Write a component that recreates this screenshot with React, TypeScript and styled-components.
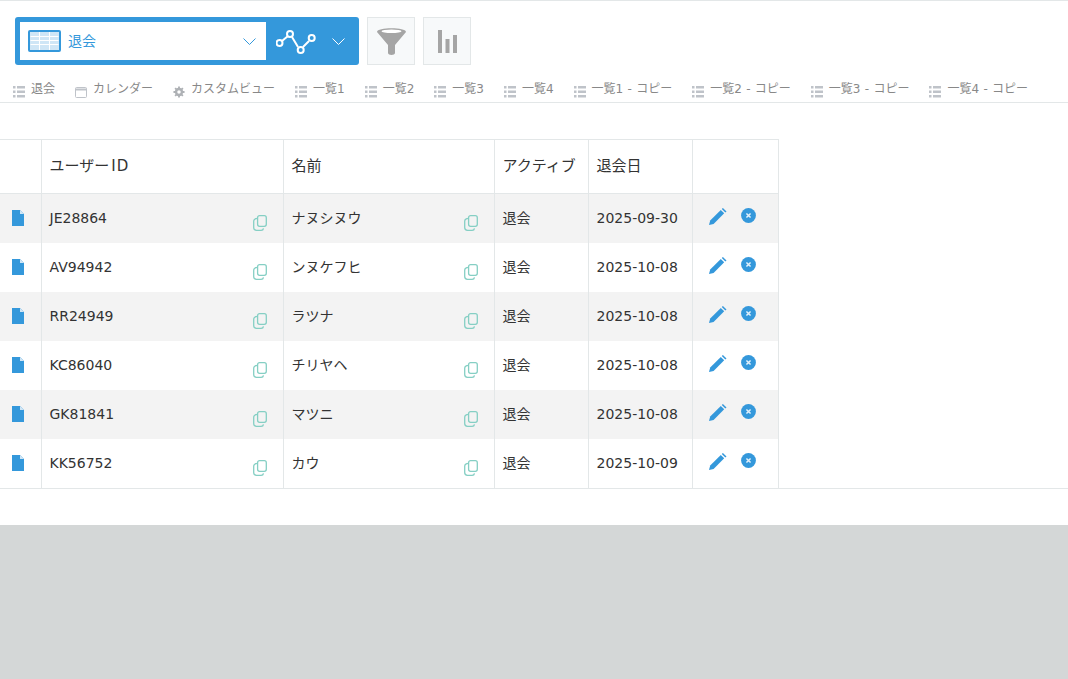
import styled, { createGlobalStyle } from 'styled-components';

const GlobalStyle = createGlobalStyle`
  html, body {
    margin: 0;
    padding: 0;
    background: #d4d7d7;
  }
  body {
    font-family: "DejaVu Sans", "Noto Sans CJK JP", sans-serif;
    color: #333;
  }
`;

const Page = styled.div`
  background: #fff;
  height: 525px;
  border-top: 1px solid #e3e7e8;
  box-sizing: border-box;
`;

const Toolbar = styled.div`
  display: flex;
  align-items: flex-start;
  gap: 8px;
  padding: 16px 0 0 15px;
`;

const ViewSwitcher = styled.div`
  display: flex;
  width: 344px;
  height: 48px;
  box-sizing: border-box;
  padding: 5px 0 5px 5px;
  background: #3498db;
  border-radius: 3px;
`;

const ViewSelect = styled.div`
  display: flex;
  align-items: center;
  width: 246px;
  background: #fff;
  padding: 0 10px 0 8px;
  box-sizing: border-box;
`;

const ViewName = styled.span`
  flex: 1;
  margin: 0 0 2px 7px;
  font-size: 14px;
  color: #3498db;
`;

const GraphSelect = styled.div`
  display: flex;
  align-items: center;
  padding-left: 10px;
  gap: 16px;
`;

const ToolButton = styled.div`
  display: flex;
  align-items: center;
  justify-content: center;
  width: 48px;
  height: 48px;
  box-sizing: border-box;
  background: #f7f9fa;
  border: 1px solid #e3e7e8;
`;

const Tabs = styled.div`
  display: flex;
  gap: 20px;
  height: 38px;
  padding: 16px 0 0 13px;
  box-sizing: border-box;
  border-bottom: 1px solid #e3e7e8;
`;

const Tab = styled.div`
  display: flex;
  align-items: flex-start;
  gap: 6px;
  font-size: 12px;
  line-height: 17px;
  word-spacing: 0.5px;
  color: #888;
  white-space: nowrap;
  svg {
    margin-top: 5px;
    flex: none;
  }
`;

const Table = styled.table`
  margin-top: 36px;
  width: 778px;
  table-layout: fixed;
  border-collapse: collapse;
  border-top: 1px solid #e3e7e8;
  font-size: 14px;
`;

const TableFoot = styled.div`
  border-top: 1px solid #e3e7e8;
`;

const HeadCell = styled.th`
  height: 54px;
  padding: 0 8px 5px;
  box-sizing: border-box;
  font-size: 15px;
  font-weight: 400;
  text-align: left;
  white-space: nowrap;
  border-right: 1px solid #e3e7e8;
  border-bottom: 1px solid #e3e7e8;
`;

const HeadLatin = styled.span`
  margin-left: 2px;
  letter-spacing: 1px;
`;

const Row = styled.tr<{ $odd: boolean }>`
  height: 49px;
  background: ${(p) => (p.$odd ? '#f3f3f3' : '#fff')};
`;

const Cell = styled.td`
  padding: 0 8px;
  box-sizing: border-box;
  white-space: nowrap;
  border-right: 1px solid #e3e7e8;
`;

const IconCell = styled(Cell)`
  padding: 0 0 0 12px;
  line-height: 0;
`;

const StatusCell = styled(Cell)`
  padding-bottom: 2px;
`;

const CopyCell = styled.div`
  display: flex;
  align-items: center;
  justify-content: space-between;
  padding-right: 8px;
  svg {
    margin-top: 10px;
  }
`;

const NameText = styled.span`
  margin-bottom: 2px;
`;

const Actions = styled.div`
  display: flex;
  align-items: center;
  gap: 14px;
  padding: 0 0 5px 8px;
  svg:first-child {
    margin-top: 2px;
  }
`;

const Chevron = ({ color }: { color: string }) => (
  <svg width="13" height="7" viewBox="0 0 13 7" fill="none">
    <path d="M0.5 0.5l6 6 6-6" stroke={color} strokeWidth="1" />
  </svg>
);

const TableIcon = () => (
  <svg width="33" height="22" viewBox="0 0 33 22">
    <rect x="0" y="0" width="33" height="22" rx="2" fill="#3498db" />
    <rect x="2" y="2" width="29" height="18" fill="#cfe6f6" />
    <path d="M2.5 6.5h28M2.5 10.5h28M2.5 14.5h28M11.5 2v18M21.5 2v18" stroke="#fff" strokeWidth="1" />
  </svg>
);

const GraphIcon = () => (
  <svg width="40" height="26" viewBox="0 0 40 26" fill="none" stroke="#fff" strokeWidth="2">
    <path d="M6 13l6-5M16 9l6 10M27 19l6-6" />
    <circle cx="3.5" cy="15" r="3" />
    <circle cx="14" cy="6" r="3" />
    <circle cx="24.7" cy="22" r="3" />
    <circle cx="35.7" cy="10" r="3" />
  </svg>
);

const FunnelIcon = () => (
  <svg width="29" height="27" viewBox="0 0 29 27">
    <path d="M0 4C0 -1 29 -1 29 4L18 17V25C18 27.5 11 27.5 11 25V17Z" fill="#a5a5a5" />
    <ellipse cx="14.5" cy="3.2" rx="10" ry="1.7" fill="#fff" />
  </svg>
);

const BarsIcon = () => (
  <svg width="19" height="23" viewBox="0 0 19 23" fill="#a5a5a5">
    <rect x="0" y="0" width="4" height="23" />
    <rect x="7.5" y="9" width="4" height="14" />
    <rect x="15" y="5" width="4" height="18" />
  </svg>
);

const ListIcon = () => (
  <svg width="12" height="12" viewBox="0 0 12 12" fill="#bfc3c9">
    <rect x="0" y="0" width="2.5" height="2.5" />
    <rect x="4" y="0" width="8" height="2.5" />
    <rect x="0" y="4.5" width="2.5" height="2.5" />
    <rect x="4" y="4.5" width="8" height="2.5" />
    <rect x="0" y="9" width="2.5" height="2.5" />
    <rect x="4" y="9" width="8" height="2.5" />
  </svg>
);

const CalendarIcon = () => (
  <svg width="12" height="12" viewBox="0 0 12 12" fill="none" stroke="#bfc3c9">
    <rect x="0.5" y="1.5" width="11" height="10" rx="1" />
    <path d="M0.5 3.5h11" strokeWidth="2" />
  </svg>
);

const GearIcon = () => (
  <svg width="12" height="12" viewBox="0 0 13 13" fill="none" stroke="#aeb1b5">
    <circle cx="6.5" cy="6.5" r="3.2" strokeWidth="2.6" />
    <path d="M6.5 0.5v2M6.5 10.5v2M0.5 6.5h2M10.5 6.5h2M2.3 2.3l1.4 1.4M9.3 9.3l1.4 1.4M2.3 10.7l1.4-1.4M9.3 3.7l1.4-1.4" strokeWidth="2" />
  </svg>
);

const DocIcon = () => (
  <svg width="12" height="16" viewBox="0 0 12 16">
    <path d="M0 0h8l4 4v12H0Z" fill="#3498db" />
    <path d="M8 0l4 4H8Z" fill="#cfe6f6" />
  </svg>
);

const CopyIcon = () => (
  <svg width="14" height="16" viewBox="0 0 14 16" fill="none" stroke="#85cfc4" strokeWidth="1.3">
    <rect x="4.6" y="0.7" width="8.7" height="10.6" rx="2" />
    <path d="M4.6 3.4C2 3.4 0.7 4.4 0.7 6.4v6.2c0 1.8 1 2.7 2.8 2.7h4.6c1.3 0 2.2-.7 2.4-2" />
  </svg>
);

const PencilIcon = () => (
  <svg width="18" height="17" viewBox="0 0 18 17" fill="#3498db">
    <path d="M0 17l1.2-4.6L11.8 1.9l3.4 3.4L4.6 15.9Z" />
    <path d="M12.8 0.9l1.1-0.9 3.6 3.4-1.2 1Z" />
  </svg>
);

const CloseIcon = () => (
  <svg width="15" height="15" viewBox="0 0 16 16">
    <circle cx="8" cy="8" r="7.9" fill="#3498db" />
    <path d="M5.8 5.8l4.4 4.4M10.2 5.8l-4.4 4.4" stroke="#e3f1fb" strokeWidth="1.6" />
  </svg>
);

const tabs = [
  { label: '退会', icon: <ListIcon /> },
  { label: 'カレンダー', icon: <CalendarIcon /> },
  { label: 'カスタムビュー', icon: <GearIcon /> },
  { label: '一覧1', icon: <ListIcon /> },
  { label: '一覧2', icon: <ListIcon /> },
  { label: '一覧3', icon: <ListIcon /> },
  { label: '一覧4', icon: <ListIcon /> },
  { label: '一覧1 - コピー', icon: <ListIcon /> },
  { label: '一覧2 - コピー', icon: <ListIcon /> },
  { label: '一覧3 - コピー', icon: <ListIcon /> },
  { label: '一覧4 - コピー', icon: <ListIcon /> },
];

const records = [
  { id: 'JE28864', name: 'ナヌシヌウ', date: '2025-09-30' },
  { id: 'AV94942', name: 'ンヌケフヒ', date: '2025-10-08' },
  { id: 'RR24949', name: 'ラツナ', date: '2025-10-08' },
  { id: 'KC86040', name: 'チリヤヘ', date: '2025-10-08' },
  { id: 'GK81841', name: 'マツニ', date: '2025-10-08' },
  { id: 'KK56752', name: 'カウ', date: '2025-10-09' },
];

export default function App() {
  return (
    <>
      <GlobalStyle />
      <Page>
        <Toolbar>
          <ViewSwitcher>
            <ViewSelect>
              <TableIcon />
              <ViewName>退会</ViewName>
              <Chevron color="#3498db" />
            </ViewSelect>
            <GraphSelect>
              <GraphIcon />
              <Chevron color="#fff" />
            </GraphSelect>
          </ViewSwitcher>
          <ToolButton>
            <FunnelIcon />
          </ToolButton>
          <ToolButton>
            <BarsIcon />
          </ToolButton>
        </Toolbar>
        <Tabs>
          {tabs.map((tab) => (
            <Tab key={tab.label}>
              {tab.icon}
              {tab.label}
            </Tab>
          ))}
        </Tabs>
        <Table>
          <colgroup>
            <col width={41} />
            <col width={242} />
            <col width={211} />
            <col width={94} />
            <col width={104} />
            <col width={86} />
          </colgroup>
          <thead>
            <tr>
              <HeadCell />
              <HeadCell>
                ユーザー<HeadLatin>ID</HeadLatin>
              </HeadCell>
              <HeadCell>名前</HeadCell>
              <HeadCell>アクティブ</HeadCell>
              <HeadCell>退会日</HeadCell>
              <HeadCell />
            </tr>
          </thead>
          <tbody>
            {records.map((record, index) => (
              <Row key={record.id} $odd={index % 2 === 0}>
                <IconCell>
                  <DocIcon />
                </IconCell>
                <Cell>
                  <CopyCell>
                    {record.id}
                    <CopyIcon />
                  </CopyCell>
                </Cell>
                <Cell>
                  <CopyCell>
                    <NameText>{record.name}</NameText>
                    <CopyIcon />
                  </CopyCell>
                </Cell>
                <StatusCell>退会</StatusCell>
                <Cell>{record.date}</Cell>
                <Cell>
                  <Actions>
                    <PencilIcon />
                    <CloseIcon />
                  </Actions>
                </Cell>
              </Row>
            ))}
          </tbody>
        </Table>
        <TableFoot />
      </Page>
    </>
  );
}
